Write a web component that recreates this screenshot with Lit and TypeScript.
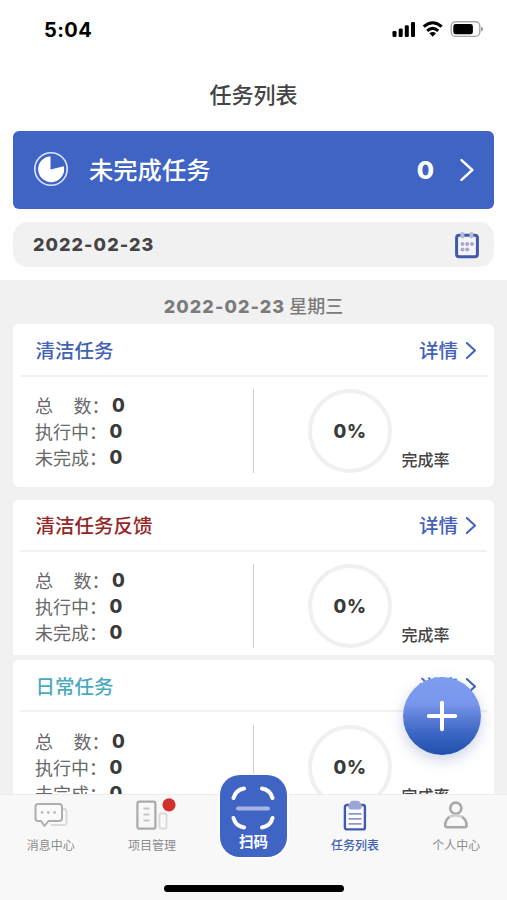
import { LitElement, html, css, svg } from "lit";
import { customElement, property } from "lit/decorators.js";

const chevron = (w: number, h: number, sw: number) => html`
  <svg width=${w} height=${h} viewBox="0 0 12 20" fill="none" stroke="currentColor" stroke-width=${sw} stroke-linecap="round" stroke-linejoin="round">
    <path d="M1 1 L10.8 10 L1 19" />
  </svg>`;

@customElement("task-card")
class TaskCard extends LitElement {
  @property() name = "";
  @property() color = "#4262b4";

  static styles = css`
    :host { display: block; background: #fff; border-radius: 6px; flex: none; }
    .head { height: var(--head, 52px); margin: 0 7px; padding: var(--nudge, 0px) 11px 0 15.5px; display: flex; align-items: center;
      justify-content: space-between; border-bottom: 2px solid #f1f1f1; box-sizing: border-box;
      font-size: 19.5px; font-weight: 500; line-height: 28px; }
    .more { display: flex; align-items: center; gap: 8px; color: #4262b8; }
    .more svg { display: block; }
    .body { display: flex; height: 100px; padding: var(--inset, 12px) 0 0 22px; box-sizing: border-box; }
    .stats { width: 217.5px; padding-top: 3px; color: #686868; font-size: 18px; }
    .row { height: 26px; line-height: 26px; display: flex; white-space: pre; }
    .gap { width: 20.5px; }
    b { font-family: Inter, sans-serif; font-weight: 800; font-size: 18.5px; color: #3a3a3a; padding-left: 2.5px; }
    .rule { width: 1.5px; height: 84px; background: #d0d0d0; }
    .ring { width: 84px; height: 84px; border: 4px solid #f0f0f0; border-radius: 50%; box-sizing: border-box;
      margin-left: 54px; display: flex; align-items: center; justify-content: center;
      font: 800 18.5px Inter, sans-serif; letter-spacing: .5px; color: #3a3a3a; }
    .rate { font-size: 16px; line-height: 22px; font-weight: 500; color: #444; margin: 59px 0 0 9.5px; }
  `;

  render() {
    return html`
      <div class="head">
        <span style="color:${this.color}">${this.name}</span>
        <span class="more">详情 ${chevron(10, 17, 2.4)}</span>
      </div>
      <div class="body">
        <div class="stats">
          <div class="row">总<span class="gap"></span>数：<b>0</b></div>
          <div class="row">执行中：<b>0</b></div>
          <div class="row">未完成：<b>0</b></div>
        </div>
        <div class="rule"></div>
        <div class="ring">0%</div>
        <div class="rate">完成率</div>
      </div>`;
  }
}

@customElement("app-root")
class AppRoot extends LitElement {
  static styles = css`
    :host { display: flex; flex-direction: column; position: relative; width: 507px; height: 900px; overflow: hidden;
      background: #fefefe; font-family: "Noto Sans CJK SC", sans-serif; }
    svg { display: block; flex: none; }
    .status { height: 60px; display: flex; justify-content: space-between; padding: 0 23px 0 44px; box-sizing: border-box; flex: none; }
    .time { font: 700 20px/60px Inter, sans-serif; letter-spacing: .4px; color: #000; }
    .title { height: 71px; line-height: 67px; text-align: center; font-size: 22px; font-weight: 500; color: #444; flex: none; }
    .banner { height: 78px; margin: 0 13px; padding: 0 20px 0 20px; border-radius: 6px; background: #4064c4; color: #fff;
      display: flex; align-items: center; flex: none; }
    .banner svg:first-child { margin-top: -2px; }
    .label { font-size: 24.3px; font-weight: 500; margin: -3px 0 0 20px; flex: 1; }
    .count { font: 800 25px Inter, sans-serif; margin-right: 26px; }
    .date { height: 45px; margin: 13px 13px 0; padding: 0 15px 0 20px; border-radius: 15px; background: #f1f1f1;
      display: flex; align-items: center; justify-content: space-between; box-sizing: border-box; flex: none; }
    .num { font-family: Inter, sans-serif; font-weight: 800; font-size: 18px; letter-spacing: 1.05px; color: #444; }
    .date .num { margin-top: -1px; }
    .list { margin-top: 13px; height: 514px; overflow: hidden; background: #f1f1f1; padding: 0 13px; box-sizing: border-box;
      display: flex; flex-direction: column; flex: none; }
    .day { height: 44px; line-height: 50px; text-align: center; font-size: 18px; font-weight: 500; color: #7b7b7b; flex: none; }
    .day .num { color: #7b7b7b; }
    .first { height: 163px; margin-bottom: 13px; --head: 53px; --nudge: 1px; }
    .second { height: 155px; margin-bottom: 5px; border-radius: 6px 6px 0 0; }
    .third { height: 163px; --inset: 13px; --nudge: 2px; }
    .tabs { height: 106px; background: #f8f8f8; border-top: 1px solid #ececec; box-sizing: border-box;
      display: grid; grid-template-columns: repeat(5, 1fr); flex: none; }
    .tab { display: flex; flex-direction: column; align-items: center; font-size: 12px; line-height: 18px; color: #8c8c8c; padding-top: 5px; }
    .tab svg { margin-bottom: 4px; }
    .active { color: #4262b4; font-weight: 500; }
    .scan { width: 67px; height: 82px; margin-top: -20px; justify-self: center; background: #4064c4; border-radius: 20px;
      box-shadow: 0 0 0 2px #fdfdfd; color: #fff; font-size: 14.5px; font-weight: 700; line-height: 20px;
      display: flex; flex-direction: column; align-items: center; padding-top: 10px; box-sizing: border-box; z-index: 1; }
    .home { position: absolute; left: 164px; top: 885px; width: 180px; height: 7px; border-radius: 4px; background: #000; }
    .fab { position: absolute; left: 403px; top: 677px; width: 78px; height: 78px; border-radius: 50%;
      background: linear-gradient(#7f9dee 0%, #7896ec 35%, #6283db 48%, #3c66c4 72%, #1f50ab 100%);
      box-shadow: 0 5px 14px rgba(50, 80, 150, .25); display: flex; align-items: center; justify-content: center; }
  `;

  render() {
    return html`
      <div class="status">
        <span class="time">5:04</span>
        <svg width="92" height="60" viewBox="392 0 92 60">
          <rect x="392.5" y="31" width="4" height="6" rx="1.2" />
          <rect x="398.7" y="28.5" width="4" height="8.5" rx="1.2" />
          <rect x="404.8" y="25.3" width="4" height="11.7" rx="1.2" />
          <rect x="411" y="22" width="4" height="15" rx="1.2" />
          <g fill="none" stroke="#000" stroke-width="3">
            <path d="M423.7 26.7 Q432.7 18.8 441.7 26.7" />
            <path d="M427.2 30.8 Q432.7 26 438.2 30.8" />
          </g>
          <path d="M429.4 33.2 Q432.7 30.6 436 33.2 L432.7 36.8 Z" />
          <rect x="451.2" y="21.8" width="28.6" height="14.6" rx="4.4" fill="none" stroke="#a8a8a8" stroke-width="1.4" />
          <rect x="453.3" y="24" width="19.6" height="10.3" rx="2.4" />
          <path d="M481 26.8 Q483.3 27.5 483.3 29.1 Q483.3 30.8 481 31.5 Z" fill="#a0a0a0" />
        </svg>
      </div>
      <div class="title">任务列表</div>
      <div class="banner">
        <svg width="36" height="36" viewBox="0 0 36 36">
          <circle cx="18" cy="18" r="16.2" fill="none" stroke="#dce6ff" stroke-width="1.6" />
          <path d="M17.5 5.2 A13 13 0 1 0 30.8 15.2 L17.5 18.4 Z" fill="#fff" />
        </svg>
        <span class="label">未完成任务</span>
        <span class="count">0</span>
        ${chevron(14, 22, 2.2)}
      </div>
      <div class="date">
        <span class="num">2022-02-23</span>
        <svg width="24" height="28" viewBox="0 0 24 28">
          <rect x="1.6" y="4.3" width="20.8" height="21.4" rx="2.5" fill="#f4f4fb" stroke="#4059a9" stroke-width="3" />
          <g fill="#b4b9d8"><rect x="5.4" y="1" width="4" height="6.4" rx="2" /><rect x="14.4" y="1" width="4" height="6.4" rx="2" /></g>
          <g fill="#a9a9c9">
            ${[[7.5, 13], [12.2, 13], [17, 13], [7.5, 18.5], [12.2, 18.5]].map(
              ([x, y]) => svg`<circle cx=${x} cy=${y} r="2" />`
            )}
          </g>
        </svg>
      </div>
      <div class="list">
        <div class="day"><span class="num">2022-02-23</span> 星期三</div>
        <task-card class="first" name="清洁任务"></task-card>
        <task-card class="second" name="清洁任务反馈" color="#922828"></task-card>
        <task-card class="third" name="日常任务" color="#4babbd"></task-card>
      </div>
      <div class="tabs">
        <div class="tab">
          <svg width="34" height="32" viewBox="0 0 34 32" fill="none" stroke-linejoin="round">
            <path d="M29 9 H30 Q32.5 9 32.5 11.5 V22.5 Q32.5 25 30 25 H17" stroke="#dadada" stroke-width="2" />
            <path d="M4 4 H25 Q28 4 28 7 V18 Q28 21 25 21 H14.5 L10.5 26 L7 21 H4 Q1.5 21 1.5 18 V7 Q1.5 4 4 4 Z" stroke="#aeaeae" stroke-width="2" fill="#fafafa" />
            <g fill="#bdbdbd"><circle cx="8" cy="12.5" r="1.4" /><circle cx="14.3" cy="12.5" r="1.4" /><circle cx="20.6" cy="12.5" r="1.4" /></g>
          </svg>
          消息中心
        </div>
        <div class="tab">
          <svg width="48" height="32" viewBox="128 799 48 32" fill="none" overflow="visible">
            <rect x="137.4" y="800.7" width="18" height="27" rx="2" stroke="#aaa" stroke-width="2.2" />
            <path d="M143.5 807.5 h6 M143.5 813.5 h6 M143.5 819.5 h6" stroke="#c6c6c6" stroke-width="1.8" />
            <rect x="159.5" y="812.5" width="7" height="15" rx="1.2" stroke="#d8d8d8" stroke-width="1.8" />
            <circle cx="169" cy="803.8" r="6.6" fill="#d0312c" />
          </svg>
          项目管理
        </div>
        <div class="scan">
          <svg width="48" height="46" viewBox="0 0 48 46" fill="none" stroke="#fff" stroke-width="4" stroke-linecap="round">
            <path d="M4.5 13 Q6.5 5 15 3.5 M33 3.5 Q41.5 5 43.5 13 M4.5 33 Q6.5 41 15 42.5 M33 42.5 Q41.5 41 43.5 33" />
            <path d="M9 23.5 H39" stroke="#a9b3e6" />
          </svg>
          扫码
        </div>
        <div class="tab active">
          <svg width="24" height="32" viewBox="0 0 24 32" fill="none">
            <rect x="1.9" y="5" width="20" height="24.4" rx="2" stroke="#3f5caf" stroke-width="2.4" fill="#fbfbff" />
            <path d="M5.5 13.8 h13 M5.5 18.8 h13 M5.5 23.8 h13" stroke="#9298bd" stroke-width="1.7" />
            <rect x="5.5" y="3" width="13" height="6.4" rx="2" fill="#9ba7d4" />
            <rect x="7" y="0.8" width="10" height="6" rx="2.6" fill="#9ba7d4" />
          </svg>
          任务列表
        </div>
        <div class="tab">
          <svg width="26" height="32" viewBox="0 0 26 32" fill="none" stroke-width="2.6">
            <circle cx="12.8" cy="8.2" r="5.6" stroke="#a9a9a9" />
            <path d="M6.5 16.8 Q2.2 20 2.2 25.5 Q2.2 27.2 4.2 27.2 H21.5 Q23.6 27.2 23.6 25.5 Q23.6 20 19 16.8" stroke="#a9a9a9" />
            <path d="M6.5 16.8 Q12.8 14 19 16.8" stroke="#d0d0d0" />
          </svg>
          个人中心
        </div>
      </div>
      <div class="home"></div>
      <div class="fab">
        <svg width="32" height="32" viewBox="0 0 32 32" stroke="#fff" stroke-width="4" stroke-linecap="round">
          <path d="M16 2.8 V29.2 M2.8 16 H29.2" />
        </svg>
      </div>`;
  }
}
